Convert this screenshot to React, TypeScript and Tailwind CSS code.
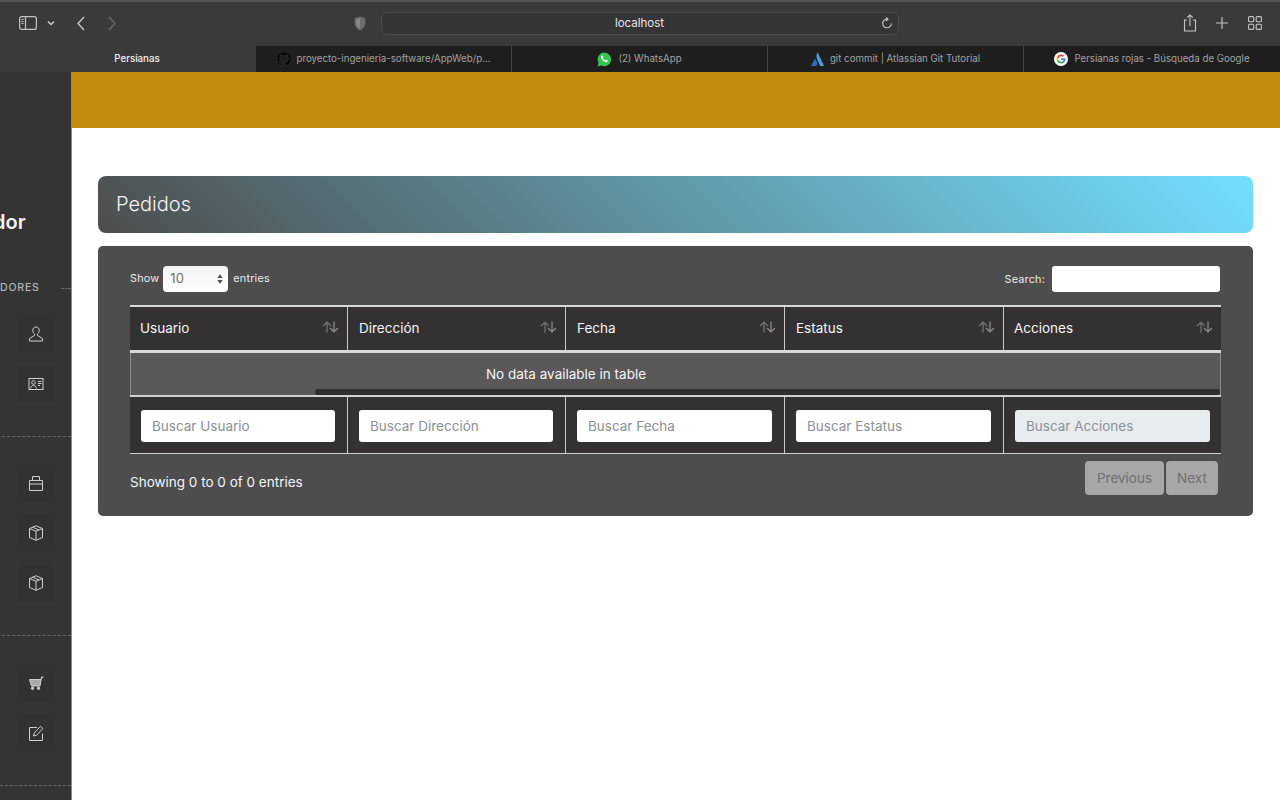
import React from "react";

const Sort = () => (
  <svg width="17" height="12" viewBox="0 0 17 12" fill="none" stroke="#8a8889" strokeWidth="1.300" className="shrink-0">
    <path d="M5 11.500V1.200M1 5l4-3.800L9 5" opacity="0.750" />
    <path d="M12 .5v10.300M8 7l4 3.800L16 7" />
  </svg>
);

const SideIcon = ({ children, mt = "" }: { children: React.ReactNode; mt?: string }) => (
  <div className={`w-9 h-9 ml-[18px] flex items-center justify-center bg-[#323232] ${mt}`}>
    <svg width="16" height="16" viewBox="0 0 16 16" fill="none" stroke="#cfcfcf" strokeWidth="1">
      {children}
    </svg>
  </div>
);

const Box = () => (
  <>
    <path d="M8 .8l6.500 2.700v9L8 15.300l-6.500-2.800v-9z" />
    <path d="M1.500 3.500L8 6.300l6.500-2.800M8 6.300v9M4.500 2.200l6.500 2.800" />
  </>
);

const Dash = ({ className }: { className: string }) => (
  <div className={`border-t border-dashed border-[#6a6a6a] ${className}`} />
);

const columns = ["Usuario", "Dirección", "Fecha", "Estatus", "Acciones"];
const colWidths = "grid grid-cols-[218px_218px_219px_219px_1fr]";

const tabs = [
  { label: "proyecto-ingenieria-software/AppWeb/p...", icon: "gh" },
  { label: "(2) WhatsApp", icon: "wa" },
  { label: "git commit | Atlassian Git Tutorial", icon: "at" },
  { label: "Persianas rojas - Búsqueda de Google", icon: "g" },
];

const TabIcon = ({ kind }: { kind: string }) => {
  if (kind === "gh")
    return (
      <svg width="14" height="14" viewBox="0 0 16 16" fill="#050505" stroke="#4a4a4a" strokeWidth="0.400">
        <path d="M8 0C3.580 0 0 3.580 0 8c0 3.540 2.290 6.530 5.470 7.590.4.070.55-.17.55-.38 0-.19-.01-.82-.01-1.490-2.010.37-2.530-.49-2.690-.94-.09-.23-.48-.94-.82-1.130-.28-.15-.68-.52-.01-.53.63-.01 1.080.58 1.230.82.720 1.210 1.870.870 2.330.66.070-.52.280-.870.510-1.070-1.780-.2-3.640-.89-3.640-3.950 0-.87.310-1.590.820-2.150-.08-.2-.36-1.020.08-2.120 0 0 .67-.21 2.200.82.640-.18 1.320-.27 2-.27s1.360.09 2 .27c1.530-1.040 2.200-.82 2.200-.82.440 1.100.160 1.920.080 2.120.51.560.820 1.270.820 2.150 0 3.070-1.870 3.750-3.650 3.950.29.250.54.730.54 1.480 0 1.070-.01 1.930-.01 2.200 0 .21.150.46.550.38A8.010 8.010 0 0016 8c0-4.420-3.580-8-8-8z" />
      </svg>
    );
  if (kind === "wa")
    return (
      <svg width="15" height="15" viewBox="0 0 16 16">
        <path d="M8 .5a7.300 7.300 0 00-6.300 11L.6 15.400l4-1.050A7.300 7.300 0 108 .5z" fill="#35c44f" />
        <path d="M5.600 4.200c.5-.2.700 0 1 .9.200.5.200.7 0 1l-.4.500c.5 1 1.300 1.800 2.500 2.400l.6-.6c.2-.2.400-.2.700-.1l1.200.6c.3.200.3.400.2.800-.2.800-1 1.200-1.800 1.100-2.600-.4-5-2.800-5.200-5.100-.1-1 .3-2.100 1.200-2.500z" fill="#fff" />
      </svg>
    );
  if (kind === "at")
    return (
      <svg width="13" height="14" viewBox="0 0 13 14">
        <path d="M6.500 0c-1.300 2.800-1.300 5.500 0 8l2.800 6H13z" fill="#4a9fe0" />
        <path d="M4 6.500L0 14h5.500l1.200-3z" fill="#2a6fb8" />
      </svg>
    );
  return (
    <svg width="14" height="14" viewBox="0 0 16 16">
      <circle cx="8" cy="8" r="8" fill="#fff" />
      <path d="M8 2.800a5.200 5.200 0 00-4.600 2.800l1.800 1.400A3.100 3.100 0 018 4.900c.8 0 1.500.3 2 .8l1.600-1.600A5.200 5.200 0 008 2.800z" fill="#ea4335" />
      <path d="M3.400 5.600a5.200 5.200 0 000 4.800l1.800-1.400a3.100 3.100 0 010-2z" fill="#fbbc05" />
      <path d="M3.400 10.400A5.200 5.200 0 008 13.200c1.300 0 2.600-.5 3.500-1.300l-1.700-1.300c-.5.300-1.100.5-1.800.5a3.100 3.100 0 01-2.800-2z" fill="#34a853" />
      <path d="M13.100 8c0-.3 0-.7-.1-1H8v2.100h2.900c-.1.600-.5 1.100-1.100 1.500l1.700 1.300c1-.9 1.600-2.300 1.600-3.900z" fill="#4285f4" />
    </svg>
  );
};

export default function App() {
  return (
    <div className="w-[1280px] h-[800px] overflow-hidden flex flex-col bg-white font-['Inter','Liberation_Sans',sans-serif]">
      {/* Browser toolbar */}
      <div className="h-[46px] shrink-0 bg-[#3a3a3a] border-t-2 border-[#555] flex items-center text-[#bdbdbd] pb-[2px]">
        <svg width="18" height="14" viewBox="0 0 18 14" fill="none" stroke="#c4c4c4" strokeWidth="1.200" className="ml-[18.500px]">
          <rect x="0.600" y="0.600" width="16.800" height="12.800" rx="2" />
          <path d="M6.500 .6v12.800" />
          <path d="M2.300 3.500h2.400M2.300 5.500h2.400M2.300 7.500h2.400" strokeWidth="0.900" />
        </svg>
        <svg width="8" height="6" viewBox="0 0 8 6" fill="none" stroke="#cfcfcf" strokeWidth="1.500" className="ml-[10px]">
          <path d="M1 1.500l3 3 3-3" />
        </svg>
        <svg width="10" height="15" viewBox="0 0 10 15" fill="none" stroke="#c8c8c8" strokeWidth="1.400" className="ml-[21px]">
          <path d="M8 1L2 7.500 8 14" />
        </svg>
        <svg width="10" height="15" viewBox="0 0 10 15" fill="none" stroke="#6a6a6a" strokeWidth="1.400" className="ml-[21px]">
          <path d="M2 1l6 6.500L2 14" />
        </svg>
        <svg width="12" height="15" viewBox="0 0 12 15" className="ml-[237px]">
          <path d="M6 .5l5.300 1.700v5c0 3.300-2.300 5.700-5.300 7.300C3 12.900.7 10.500.7 7.200v-5z" fill="#6f6f6f" />
          <path d="M6 2.500v10c-2-1.200-3.500-3-3.500-5.300V3.500z" fill="#8a8a8a" />
        </svg>
        <div className="ml-[15px] w-[518px] h-[23px] rounded-md border border-[#4c4c4c] bg-[#353535] flex items-center justify-center relative">
          <span className="text-[11.500px] text-[#e6e6e6] pt-[1px]">localhost</span>
          <svg width="12" height="13" viewBox="0 0 12 13" fill="none" stroke="#c8c8c8" strokeWidth="1.100" className="absolute right-[5px] top-[4px]">
            <path d="M6.500 2.200A4.300 4.300 0 1010.300 6.500" />
            <path d="M5 .5l2 1.700-2 1.700" />
          </svg>
        </div>
        <svg width="14" height="18" viewBox="0 0 14 18" fill="none" stroke="#c4c4c4" strokeWidth="1.100" className="ml-[284px]">
          <path d="M4 6H1.500v11h11V6H10M7 12V1M4.300 3.500L7 .9l2.700 2.600" />
        </svg>
        <svg width="12" height="12" viewBox="0 0 12 12" fill="none" stroke="#c4c4c4" strokeWidth="1.200" className="ml-[19px]">
          <path d="M6 0v12M0 6h12" />
        </svg>
        <svg width="14" height="14" viewBox="0 0 14 14" fill="none" stroke="#c4c4c4" strokeWidth="1.100" className="ml-[20px]">
          <rect x="0.600" y="0.600" width="5.200" height="5.200" rx="1" />
          <rect x="8.200" y="0.600" width="5.200" height="5.200" rx="1" />
          <rect x="0.600" y="8.200" width="5.200" height="5.200" rx="1" />
          <rect x="8.200" y="8.200" width="5.200" height="5.200" rx="1" />
        </svg>
      </div>

      {/* Tabs */}
      <div className="h-[26px] shrink-0 flex bg-[#1e1e1e] text-[9.700px]">
        <div className="w-[256px] bg-[#3a3a3a] flex items-center justify-center text-[#f0f0f0] font-medium pl-[18px]">
          <span className="pt-[1px]">Persianas</span>
        </div>
        {tabs.map((t, i) => (
          <div
            key={t.label}
            className={`${i === 3 ? "flex-1" : "w-[256px] border-r border-[#444]"} flex items-center justify-center gap-[6px] text-[#a3a3a3]`}
          >
            <TabIcon kind={t.icon} />
            <span className="whitespace-nowrap pt-[1px]">{t.label}</span>
          </div>
        ))}
      </div>

      <div className="flex-1 flex min-h-0">
        {/* Sidebar */}
        <aside className="w-[72px] shrink-0 bg-[#343434] border-r border-[#8a8a8a] flex flex-col overflow-hidden">
          <div className="mt-[136px] -ml-[7px] h-[28px] text-[20px] leading-[28px] font-semibold text-[#f2f2f2]">dor</div>
          <div className="mt-[43px] h-[18px] flex items-center text-[10.500px] tracking-[0.080em] text-[#b5b5b5] font-medium">
            <span>DORES</span>
            <Dash className="flex-1 ml-[21px]" />
          </div>
          <SideIcon mt="mt-[19px]">
            <path d="M8 1c-2 0-3.200 1.400-3.200 3.300 0 1.600.6 2.900 1.700 3.700v1.500L1.500 12.500V15h13v-2.500l-5-3V8c1.100-.8 1.700-2.100 1.700-3.700C11.200 2.400 10 1 8 1z" />
          </SideIcon>
          <SideIcon mt="mt-[14px]">
            <rect x="1" y="2.500" width="14" height="11" />
            <circle cx="5.500" cy="6.500" r="1.800" />
            <path d="M2.500 12.500c.3-2 1.500-3 3-3s2.700 1 3 3M10 5.500h3.500M10 7.500h3.500M10 9.500h2" />
          </SideIcon>
          <Dash className="mt-[34px] ml-[2px]" />
          <SideIcon mt="mt-[28px]">
            <path d="M1.500 5.500h13v10h-13zM4.500 5.500V1.500h7v4M1.500 9h13" />
          </SideIcon>
          <SideIcon mt="mt-[14px]"><Box /></SideIcon>
          <SideIcon mt="mt-[14px]"><Box /></SideIcon>
          <Dash className="mt-[34px] ml-[2px]" />
          <SideIcon mt="mt-[29px]">
            <path d="M15.500 2h-2L12 11H3.500L1.500 4.500h11.600" fill="#cfcfcf" fillOpacity="0.750" />
            <circle cx="4.500" cy="13.300" r="1.200" fill="#cfcfcf" />
            <circle cx="10.500" cy="13.300" r="1.200" fill="#cfcfcf" />
          </SideIcon>
          <SideIcon mt="mt-[14px]">
            <path d="M14.500 8.500v7h-13v-13H9" />
            <path d="M5.500 11l.7-3 6.300-6.700 2.300 2.200L8.500 10.300z" />
          </SideIcon>
          <Dash className="mt-[34px]" />
        </aside>

        {/* Main */}
        <main className="flex-1 min-w-0 flex flex-col">
          <div className="h-[56px] shrink-0 bg-[#c48a0e]" />
          <div className="pl-[26px] pr-[27px] pt-[48px]">
            <div className="h-[57px] rounded-lg bg-[linear-gradient(45deg,#4d4d4d,#72e0ff)] flex items-center pl-[18px] pb-[2px]">
              <h1 className="text-[20px] font-light text-[#f4f4f4]">Pedidos</h1>
            </div>
            <section className="mt-[13px] h-[270px] rounded-[5px] bg-[#4d4d4d] pl-[32px] pr-[32px] pt-[20px] text-white">
              <div className="h-[26px] flex items-center justify-between text-[10.800px] tracking-[0.020em] text-[#ececec]">
                <div className="flex items-center">
                  <span>Show</span>
                  <div className="ml-[4px] w-[65px] h-[26px] rounded bg-gradient-to-b from-[#f2f2f2] to-[#ffffff] text-[#6e6e6e] text-[13px] flex items-center justify-between pl-[7px] pr-[5px]">
                    <span>10</span>
                    <svg width="6" height="12" viewBox="0 0 6 12" fill="#555">
                      <path d="M3 1l2.700 4H.3zM3 11L.3 7h5.400z" />
                    </svg>
                  </div>
                  <span className="ml-[5px]">entries</span>
                </div>
                <div className="flex items-center pr-[1px]">
                  <span className="mt-[2px]">Search:</span>
                  <div className="ml-[7px] w-[168px] h-[26px] rounded-[3px] bg-white" />
                </div>
              </div>

              <div className="mt-[13px] w-[1091px]">
                <div className={`${colWidths} bg-[#333132] border-t-2 border-b-[3px] border-[#d8d8d8] h-[48px]`}>
                  {columns.map((c, i) => (
                    <div
                      key={c}
                      className={`flex justify-between ${i === 0 || i === 4 ? "pl-[10px]" : "pl-[11px]"} pr-[8px] ${i < 4 ? "border-r border-[#c8c8c8]" : ""}`}
                    >
                      <span className="text-[13.500px] leading-[43px] text-[#f5f5f5]">{c}</span>
                      <span className="mt-[14px]"><Sort /></span>
                    </div>
                  ))}
                </div>
                <div className="h-[42px] bg-[#5a5859] border-x border-x-[#8a8a8a] flex flex-col">
                  <div className="h-[36px] pt-[4px] pr-[219px] text-center text-[13.500px] leading-[35px] text-[#f5f5f5]">
                    No data available in table
                  </div>
                  <div className="h-[6px] ml-[184px] rounded-full bg-[#2f2d2e]" />
                </div>
                <div className={`${colWidths} bg-[#333132] border-t-2 border-b border-[#d0d0d0] h-[59px]`}>
                  {columns.map((c, i) => (
                    <div
                      key={c}
                      className={`pl-[11px] pt-[13px] ${i < 4 ? "pr-[12px] border-r border-[#c8c8c8]" : "pr-[11px]"}`}
                    >
                      <input
                        readOnly
                        placeholder={`Buscar ${c}`}
                        className={`w-full h-[32px] rounded-[3px] px-[11px] text-[13.500px] placeholder:text-[#8b9096] outline-none ${i === 4 ? "bg-[#e9ecef]" : "bg-white"}`}
                      />
                    </div>
                  ))}
                </div>
              </div>

              <div className="mt-[7px] flex items-start justify-between pr-[3px]">
                <span className="mt-[11px] text-[13.500px] leading-[21px] text-[#f5f5f5]">Showing 0 to 0 of 0 entries</span>
                <div className="flex gap-[2px] text-[13.500px] text-[#707070]">
                  <div className="h-[34px] w-[79px] rounded-sm bg-[#a7a7a7] flex items-center justify-center">Previous</div>
                  <div className="h-[34px] w-[52px] rounded-sm bg-[#a7a7a7] flex items-center justify-center">Next</div>
                </div>
              </div>
            </section>
          </div>
        </main>
      </div>
    </div>
  );
}
